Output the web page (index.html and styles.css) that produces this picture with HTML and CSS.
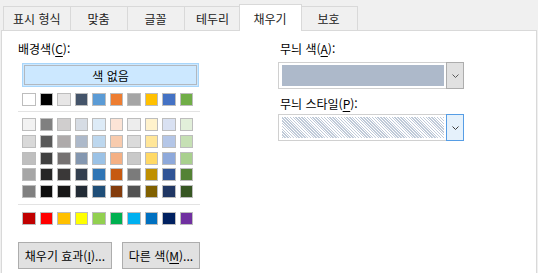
FILE: index.html
```html
<!DOCTYPE html>
<html lang="ko">
<head>
    <meta charset="UTF-8" />
    <title>셀 서식 - 채우기</title>
    <link rel="stylesheet" href="styles.css">
</head>
<body>
    <div class="tabs">
        <div class="tab">표시 형식</div>
        <div class="tab">맞춤</div>
        <div class="tab">글꼴</div>
        <div class="tab">테두리</div>
        <div class="tab active">채우기</div>
        <div class="tab">보호</div>
    </div>

    <div class="panel">
        <div class="left">
            <div class="label">배경색(<u>C</u>):</div>

            <div class="no-color">색 없음</div>

            <div class="swatches">
                <span style="background:#ffffff"></span>
                <span style="background:#000000"></span>
                <span style="background:#e7e6e6"></span>
                <span style="background:#44546a"></span>
                <span style="background:#5b9bd5"></span>
                <span style="background:#ed7d31"></span>
                <span style="background:#a5a5a5"></span>
                <span style="background:#ffc000"></span>
                <span style="background:#4472c4"></span>
                <span style="background:#70ad47"></span>
            </div>

            <div class="sep"></div>

            <div class="swatches tints">
                <span style="background:#f2f2f2"></span>
                <span style="background:#808080"></span>
                <span style="background:#d0cece"></span>
                <span style="background:#d6dce4"></span>
                <span style="background:#ddebf7"></span>
                <span style="background:#fce4d6"></span>
                <span style="background:#ededed"></span>
                <span style="background:#fff2cc"></span>
                <span style="background:#d9e1f2"></span>
                <span style="background:#e2efda"></span>

                <span style="background:#d9d9d9"></span>
                <span style="background:#595959"></span>
                <span style="background:#aeaaaa"></span>
                <span style="background:#adb9ca"></span>
                <span style="background:#bdd7ee"></span>
                <span style="background:#f8cbad"></span>
                <span style="background:#dbdbdb"></span>
                <span style="background:#ffe699"></span>
                <span style="background:#b4c6e7"></span>
                <span style="background:#c6e0b4"></span>

                <span style="background:#bfbfbf"></span>
                <span style="background:#404040"></span>
                <span style="background:#757171"></span>
                <span style="background:#8497b0"></span>
                <span style="background:#9bc2e6"></span>
                <span style="background:#f4b084"></span>
                <span style="background:#c9c9c9"></span>
                <span style="background:#ffd966"></span>
                <span style="background:#8ea9db"></span>
                <span style="background:#a9d08e"></span>

                <span style="background:#a6a6a6"></span>
                <span style="background:#262626"></span>
                <span style="background:#3a3838"></span>
                <span style="background:#333f4f"></span>
                <span style="background:#2f75b5"></span>
                <span style="background:#c65911"></span>
                <span style="background:#7b7b7b"></span>
                <span style="background:#bf8f00"></span>
                <span style="background:#305496"></span>
                <span style="background:#548235"></span>

                <span style="background:#808080"></span>
                <span style="background:#0d0d0d"></span>
                <span style="background:#171616"></span>
                <span style="background:#222b35"></span>
                <span style="background:#1f4e78"></span>
                <span style="background:#833c0c"></span>
                <span style="background:#525252"></span>
                <span style="background:#806000"></span>
                <span style="background:#203764"></span>
                <span style="background:#375623"></span>
            </div>

            <div class="sep"></div>

            <div class="swatches standard">
                <span style="background:#c00000"></span>
                <span style="background:#ff0000"></span>
                <span style="background:#ffc000"></span>
                <span style="background:#ffff00"></span>
                <span style="background:#92d050"></span>
                <span style="background:#00b050"></span>
                <span style="background:#00b0f0"></span>
                <span style="background:#0070c0"></span>
                <span style="background:#002060"></span>
                <span style="background:#7030a0"></span>
            </div>

            <div class="buttons">
                <button class="btn btn-effects">채우기 효과(<u>I</u>)...</button>
                <button class="btn btn-more">다른 색(<u>M</u>)...</button>
            </div>
        </div>

        <div class="right">
            <div class="label">무늬 색(<u>A</u>):</div>
            <div class="combo">
                <div class="field"><div class="fill"></div></div>
                <div class="drop">
                    <svg width="7" height="4" viewBox="0 0 7 4"><polyline points="0.5,0.5 3.5,3.5 6.5,0.5" fill="none" stroke="#5a5a5a" stroke-width="1"/></svg>
                </div>
            </div>

            <div class="label label-pattern">무늬 스타일(<u>P</u>):</div>
            <div class="combo combo-pattern">
                <div class="field"><div class="fill hatch"></div></div>
                <div class="drop drop-focus">
                    <svg width="7" height="4" viewBox="0 0 7 4"><polyline points="0.5,0.5 3.5,3.5 6.5,0.5" fill="none" stroke="#3c3c3c" stroke-width="1"/></svg>
                </div>
            </div>
        </div>
    </div>
</body>
</html>
```

FILE: styles.css
```css
body {
    margin: 0;
    background-color: #f0f0f0;
    font-family: "Noto Sans CJK KR", "Noto Sans", sans-serif;
    font-size: 12px;
    color: #000;
}

u {
    text-decoration-thickness: 1px;
    text-underline-offset: 2px;
}

/* tab strip */
.tabs {
    display: flex;
    align-items: flex-end;
    height: 24px;
    padding: 6px 0 0 3px;
}

.tab {
    box-sizing: border-box;
    height: 24px;
    min-width: 58px;
    padding: 0 9px;
    margin-right: -1px;
    display: flex;
    align-items: center;
    justify-content: center;
    border: 1px solid #d9d9d9;
    border-bottom: none;
    background-color: #f0f0f0;
    color: #222;
}

.tab.active {
    position: relative;
    z-index: 1;
    height: 27px;
    min-width: 63px;
    margin: 0 -2px -1px -2px;
    background-color: #fff;
}

/* page body */
.panel {
    box-sizing: border-box;
    display: flex;
    width: 536px;
    height: 250px;
    margin-left: 1px;
    padding: 10px 0 0 16px;
    border: 1px solid #d9d9d9;
    background-color: #fff;
}

.left {
    width: 182px;
}

.label {
    height: 16px;
    line-height: 16px;
    white-space: nowrap;
}

.no-color {
    box-sizing: border-box;
    width: 177px;
    height: 24px;
    margin: 6px 0 0 4px;
    line-height: 23px;
    text-align: center;
    background-color: #cce8ff;
    border: 1px solid #a8d6fb;
    box-shadow: inset 0 0 0 1px #cce8ff, inset 0 0 0 2px #b2b8bf;
}

.swatches {
    display: grid;
    grid-template-columns: repeat(10, 13.5px);
    column-gap: 4px;
    width: 171px;
    margin: 6px 0 0 4px;
}

.swatches span {
    box-sizing: border-box;
    height: 13px;
    border: 1px solid #bdbdbd;
}

.tints {
    row-gap: 3.75px;
}

.standard {
    margin-top: 7px;
}

.sep {
    height: 1px;
    margin-top: 5px;
    background-color: #e3e3e3;
}

.tints + .sep {
    margin-top: 6px;
}

.buttons {
    display: flex;
    gap: 10px;
    margin-top: 17px;
}

.btn {
    box-sizing: border-box;
    height: 27px;
    padding: 0;
    border: 1px solid #adadad;
    background-color: #e1e1e1;
    font-family: inherit;
    font-size: 12px;
    color: #000;
    white-space: nowrap;
}

.btn-effects {
    width: 101px;
}

.btn-more {
    width: 84px;
}

/* pattern side */
.right {
    width: 186px;
    margin-left: 78px;
}

.right .label {
    padding-left: 2px;
}

.combo {
    display: flex;
    height: 27px;
    margin-top: 5px;
}

.combo-pattern {
    margin-top: 2px;
}

.label-pattern {
    margin-top: 7px;
}

.field {
    box-sizing: border-box;
    flex: 1;
    padding: 2px 2px 2px 3px;
    border: 1px solid #d0d0d0;
    border-right: none;
    background-color: #fff;
}

.fill {
    height: 100%;
    background-color: #adb9ca;
}

.hatch {
    background: repeating-linear-gradient(45deg, #bfcad8 0 1px, #ffffff 1px 2px);
}

.drop {
    box-sizing: border-box;
    width: 18px;
    display: flex;
    align-items: center;
    justify-content: center;
    border: 1px solid #adadad;
    background-color: #e1e1e1;
}

.drop-focus {
    border-color: #569de5;
    background-color: #e5f1fb;
}
```
